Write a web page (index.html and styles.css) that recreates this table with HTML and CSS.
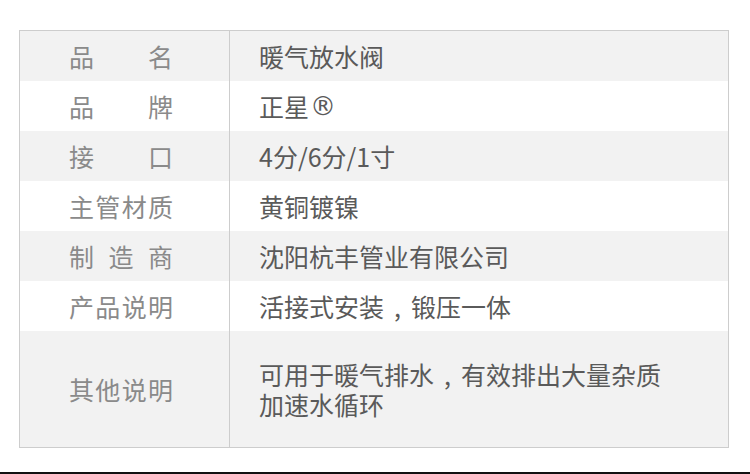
FILE: index.html
```html
<!DOCTYPE html>
<html lang="zh-CN">
<head>
<meta charset="utf-8">
<link rel="stylesheet" href="styles.css">
</head>
<body>
<div class="page">
  <div class="spec">
    <div class="row alt">
      <div class="label"><span>品</span><span>名</span></div>
      <div class="value">暖气放水阀</div>
    </div>
    <div class="row">
      <div class="label"><span>品</span><span>牌</span></div>
      <div class="value">正星<span class="reg">®</span></div>
    </div>
    <div class="row alt">
      <div class="label"><span>接</span><span>口</span></div>
      <div class="value">4分/6分/1寸</div>
    </div>
    <div class="row">
      <div class="label"><span>主</span><span>管</span><span>材</span><span>质</span></div>
      <div class="value">黄铜镀镍</div>
    </div>
    <div class="row alt">
      <div class="label"><span>制</span><span>造</span><span>商</span></div>
      <div class="value">沈阳杭丰管业有限公司</div>
    </div>
    <div class="row">
      <div class="label"><span>产</span><span>品</span><span>说</span><span>明</span></div>
      <div class="value">活接式安装<span class="punc">,</span>锻压一体</div>
    </div>
    <div class="row alt tall">
      <div class="label"><span>其</span><span>他</span><span>说</span><span>明</span></div>
      <div class="value multi"><span class="line">可用于暖气排水<span class="punc">,</span>有效排出大量杂质</span><span class="line">加速水循环</span></div>
    </div>
  </div>
  <div class="rule"></div>
</div>
</body>
</html>
```

FILE: styles.css
```css
* { box-sizing: border-box; }
html, body { margin: 0; padding: 0; background: #ffffff; }
body {
  width: 750px;
  height: 474px;
  overflow: hidden;
  font-family: "Noto Sans CJK SC", "Noto Sans", sans-serif;
}
.page { padding-top: 30px; }
.spec {
  margin-left: 19px;
  width: 710px;
  border: 1px solid #cdcdcd;
  display: flex;
  flex-direction: column;
}
.row {
  display: grid;
  grid-template-columns: 210px 1fr;
  height: 50px;
  background: #ffffff;
}
.row.alt { background: #f2f2f2; }
.row.tall { height: 116px; }
.label {
  border-right: 1px solid #cdcdcd;
  padding-left: 49px;
  padding-right: 56px;
  display: flex;
  align-items: center;
  justify-content: space-between;
  font-size: 25px;
  color: #8a8a8a;
}
.value {
  display: flex;
  align-items: center;
  padding-left: 29px;
  font-size: 25px;
  color: #5a5a5a;
}
.value.multi {
  flex-direction: column;
  align-items: flex-start;
  justify-content: center;
  line-height: 30px;
}
.line { display: block; }
.reg {
  font-family: "DejaVu Sans", sans-serif;
  font-size: 26px;
  margin-left: 1px;
}
.punc {
  display: inline-block;
  width: 27px;
  text-align: center;
}
.rule {
  margin-top: 24px;
  height: 2px;
  background: #111111;
}
```
